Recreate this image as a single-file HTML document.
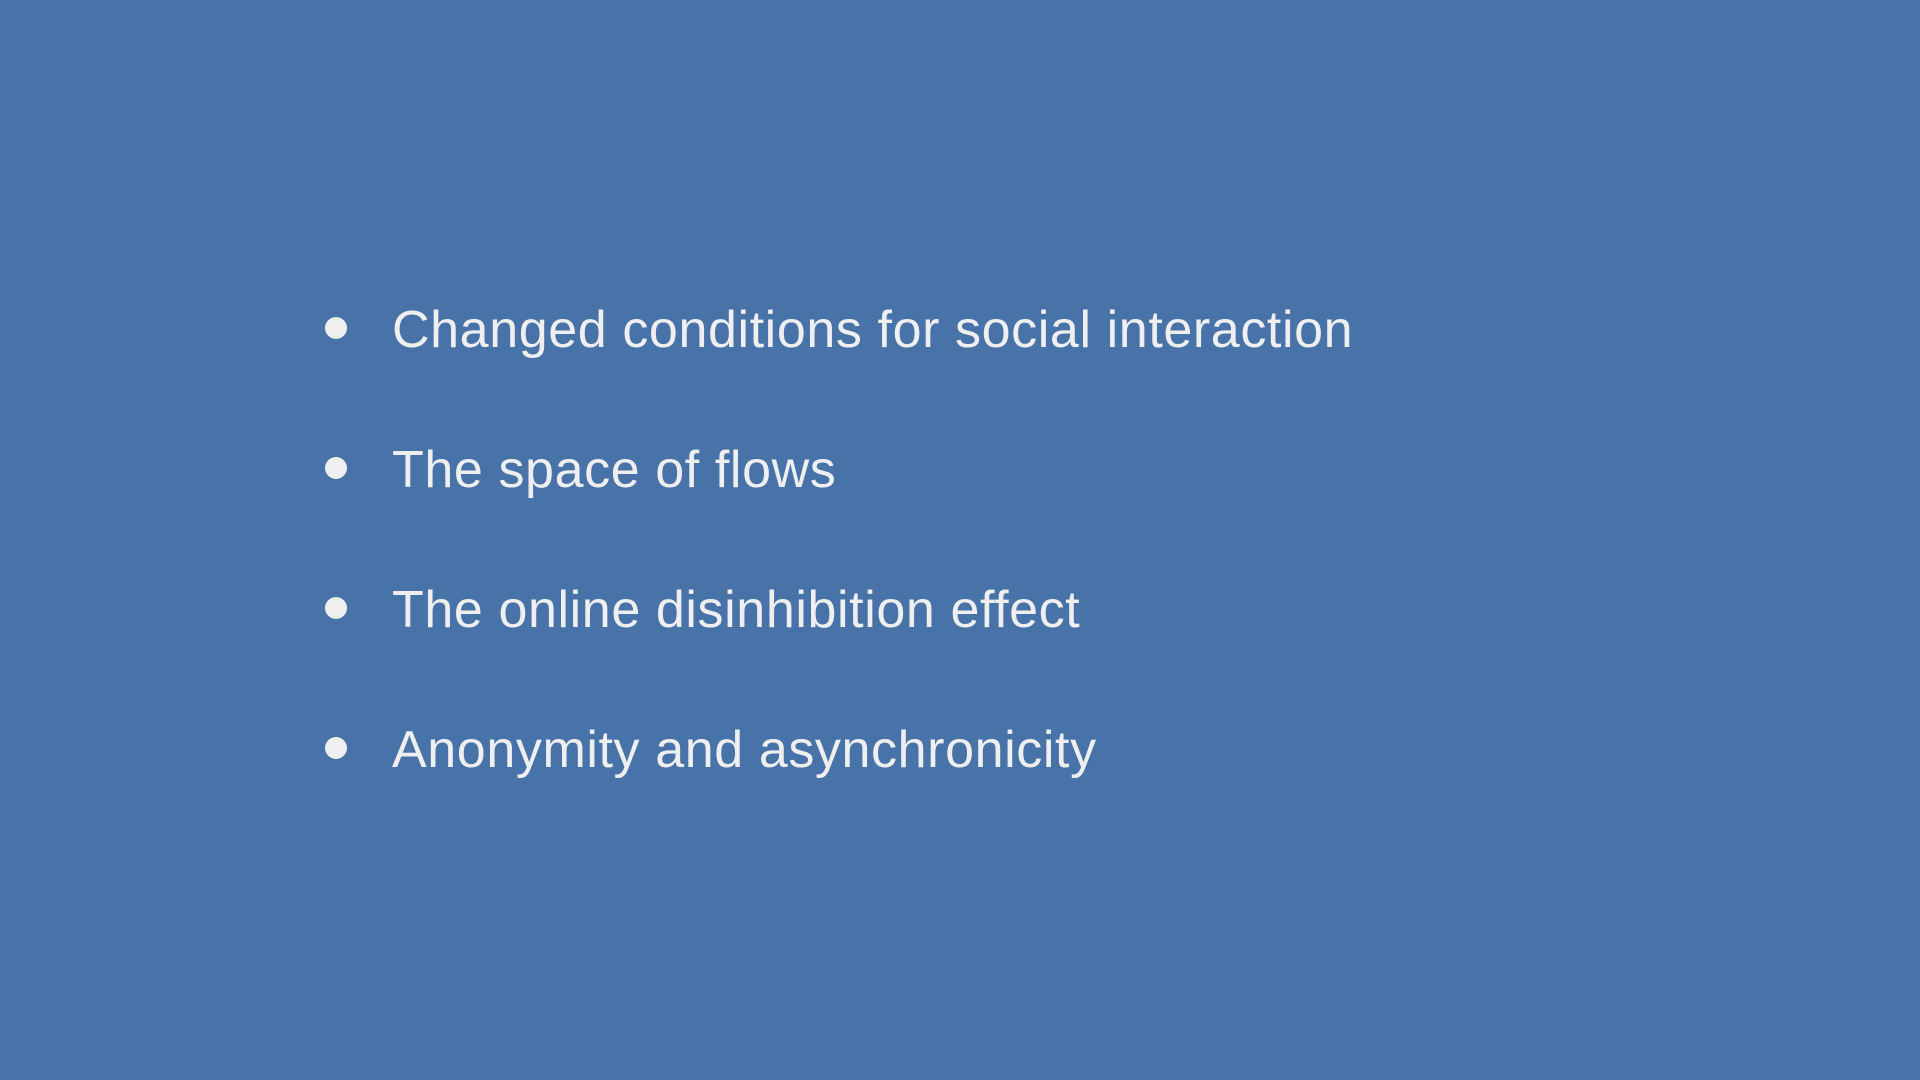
<!DOCTYPE html>
<html><head><meta charset="utf-8"><style>
html,body{margin:0;padding:0}
body{width:1920px;height:1080px;background:#4873a9;position:relative;overflow:hidden;font-family:"Liberation Sans",sans-serif;color:#efeff0}
.i{position:absolute;left:392px;font-size:52px;line-height:1;white-space:nowrap;letter-spacing:0.6px}
.d{position:absolute;left:325px;width:22px;height:22px;border-radius:50%;background:#efeff0}
</style></head><body>
<div class="d" style="top:317px"></div><div class="i" style="top:304px">Changed conditions for social interaction</div>
<div class="d" style="top:457px"></div><div class="i" style="top:444px">The space of flows</div>
<div class="d" style="top:597px"></div><div class="i" style="top:584px">The online disinhibition effect</div>
<div class="d" style="top:737px"></div><div class="i" style="top:724px">Anonymity and asynchronicity</div>
</body></html>
